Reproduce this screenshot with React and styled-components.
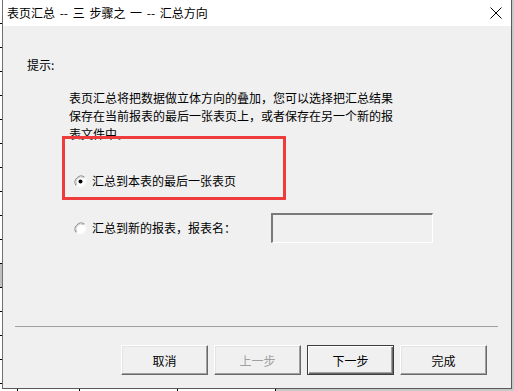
import React from 'react';
import styled, { createGlobalStyle } from 'styled-components';

const GlobalStyle = createGlobalStyle`
    html, body {
        margin: 0;
        padding: 0;
        background: #ffffff;
    }
    body {
        font-family: "Noto Sans CJK SC", "Liberation Sans", sans-serif;
        font-size: 12px;
        color: #000000;
    }
`;

// the sheet behind the dialog: row ticks on the left, column ticks below
const Screen = styled.div`
    position: relative;
    width: 514px;
    height: 391px;
    overflow: hidden;
    display: flex;
    background:
        linear-gradient(#000, #000) 17px 389px / 1px 2px no-repeat,
        linear-gradient(#000, #000) 79px 389px / 1px 2px no-repeat,
        linear-gradient(#000, #000) 177px 389px / 1px 2px no-repeat,
        linear-gradient(#000, #000) 275px 389px / 1px 2px no-repeat,
        linear-gradient(#c8c8c8, #c8c8c8) 276px 389px / 238px 2px no-repeat,
        linear-gradient(#c8c8c8, #c8c8c8) 512px 0 / 2px 391px no-repeat,
        linear-gradient(#c0c0c0, #c0c0c0) 0 264px / 2px 23px no-repeat,
        repeating-linear-gradient(to bottom, transparent 0 23px, #000 23px 24px) 0 0 / 2px 389px no-repeat,
        #ffffff;
`;

const Dialog = styled.div`
    margin-left: 2px;
    width: 510px;
    height: 389px;
    box-sizing: border-box;
    border-left: 1px solid #707070;
    border-right: 1px solid #5a5a5a;
    border-bottom: 1px solid #5a5a5a;
    background: #f0f0f0;
    display: flex;
    flex-direction: column;
`;

const TitleBar = styled.div`
    height: 26px;
    flex-shrink: 0;
    background: #ffffff;
    display: flex;
    align-items: center;
    justify-content: space-between;
    padding: 0 8px 0 4px;
`;

const Title = styled.span`
    font-size: 12px;
    line-height: 18px;
    white-space: pre;
    word-spacing: 2px;
`;

const CloseButton = styled.button`
    width: 14px;
    height: 14px;
    padding: 0;
    border: none;
    background: transparent;
    display: flex;
    align-items: center;
    justify-content: center;
`;

const Body = styled.div`
    flex: 1;
    display: flex;
    flex-direction: column;
    padding: 30px 0 13px 0;
`;

const HintLabel = styled.div`
    margin-left: 24px;
    line-height: 18px;
`;

const Paragraph = styled.p`
    margin: 15px 0 0 66px;
    width: 330px;
    line-height: 18px;
`;

const OptionRow = styled.div`
    display: flex;
    align-items: center;
    margin-left: 71px;
    margin-top: ${p => p.$gap}px;
    height: ${p => p.$height}px;
`;

const RadioBox = styled.span`
    width: 13px;
    height: 13px;
    margin-right: 5px;
    display: inline-flex;
`;

const OptionLabel = styled.span`
    line-height: 18px;
`;

const NameInput = styled.div`
    margin-left: 35px;
    width: 162px;
    height: 30px;
    box-sizing: border-box;
    border-style: solid;
    border-width: 2px 1px 1px 2px;
    border-color: #7a7a7a #ffffff #ffffff #7a7a7a;
    background: #f0f0f0;
`;

const Separator = styled.hr`
    margin: auto 13px 0 12px;
    border: none;
    height: 1px;
    background: #a0a0a0;
`;

const ButtonRow = styled.div`
    display: flex;
    justify-content: flex-end;
    gap: 6px;
    margin-top: 18px;
    padding-right: 24px;
`;

const Button = styled.button`
    width: 87px;
    height: 30px;
    box-sizing: border-box;
    font-family: "Noto Sans CJK SC", sans-serif;
    font-size: 12px;
    color: ${p => (p.disabled ? '#a0a0a0' : '#000000')};
    background: #f0f0f0;
    border: 1px solid;
    border-color: ${p => (p.$default ? '#3c3c3c' : '#ffffff #696969 #696969 #ffffff')};
    box-shadow: ${p => (p.$default
        ? 'inset 1px 1px #ffffff, inset -1px -1px #696969, inset -2px -2px #a0a0a0'
        : 'inset -1px -1px #a0a0a0, inset 1px 1px #e3e3e3')};
    padding: 0;
`;

// annotation drawn over the dialog
const Highlight = styled.div`
    position: absolute;
    left: 62px;
    top: 136px;
    width: 224px;
    height: 64px;
    box-sizing: border-box;
    border: 3px solid #ee3b3b;
    pointer-events: none;
`;

const Radio = ({ checked }) => (
    <RadioBox>
        <svg width="13" height="13" viewBox="0 0 13 13">
            <circle cx="6.5" cy="6.5" r="6" fill="#ffffff" />
            <path d="M2.3 10.7 A6 6 0 0 1 10.7 2.3" fill="none" stroke="#808080" strokeWidth="1" />
            <path d="M3 10 A5 5 0 0 1 10 3" fill="none" stroke="#c8c8c8" strokeWidth="1" />
            <path d="M10.7 2.3 A6 6 0 0 1 2.3 10.7" fill="none" stroke="#f4f4f4" strokeWidth="1" />
            {checked && <circle cx="6.5" cy="6.5" r="2" fill="#000000" />}
        </svg>
    </RadioBox>
);

const App = () => (
    <>
        <GlobalStyle />
        <Screen>
            <Dialog>
                <TitleBar>
                    <Title>{'表页汇总 -- 三 步骤之 一 -- 汇总方向'}</Title>
                    <CloseButton aria-label="关闭">
                        <svg width="12" height="12" viewBox="0 0 12 12">
                            <path d="M0.5 0.5 L11.5 11.5 M11.5 0.5 L0.5 11.5" stroke="#000" strokeWidth="1" />
                        </svg>
                    </CloseButton>
                </TitleBar>
                <Body>
                    <HintLabel>提示:</HintLabel>
                    <Paragraph>表页汇总将把数据做立体方向的叠加，您可以选择把汇总结果保存在当前报表的最后一张表页上，或者保存在另一个新的报表文件中。</Paragraph>
                    <OptionRow $gap={29} $height={18}>
                        <Radio checked />
                        <OptionLabel>汇总到本表的最后一张表页</OptionLabel>
                    </OptionRow>
                    <OptionRow $gap={23} $height={30}>
                        <Radio />
                        <OptionLabel>汇总到新的报表，报表名：</OptionLabel>
                        <NameInput />
                    </OptionRow>
                    <Separator />
                    <ButtonRow>
                        <Button>取消</Button>
                        <Button disabled>上一步</Button>
                        <Button $default>下一步</Button>
                        <Button>完成</Button>
                    </ButtonRow>
                </Body>
            </Dialog>
            <Highlight />
        </Screen>
    </>
);

export default App;
